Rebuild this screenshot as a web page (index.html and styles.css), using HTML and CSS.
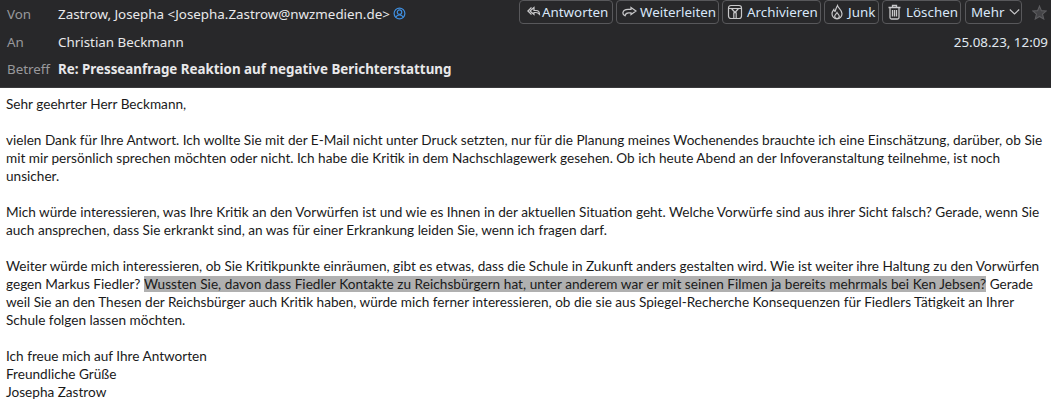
FILE: index.html
```html
<!DOCTYPE html>
<html lang="de">
<head>
<meta charset="utf-8">
<title>Re: Presseanfrage</title>
<link rel="stylesheet" href="styles.css">
</head>
<body>
<header class="head">
  <div class="row row-from">
    <span class="label">Von</span>
    <span class="value">Zastrow, Josepha &lt;Josepha.Zastrow@nwzmedien.de&gt;</span>
    <svg class="contact" width="13" height="13" viewBox="0 0 14 14" fill="none" stroke="#3f8fe0" stroke-width="1.3"><circle cx="7" cy="7" r="5.8"/><circle cx="7" cy="5.6" r="2.4"/><path d="M3 11c1-2 2.4-2.600 4-2.600s3 .6 4 2.600"/></svg>
    <div class="actions">
      <button class="btn btn-reply"><svg width="14" height="14" viewBox="0 0 14 14" fill="none" stroke="#c8c8ca" stroke-width="1.2"><path d="M7 2.500 3 6l4 3.500V7.500h2c1.500 0 2.500.7 3.500 1.800 0-1.800-.7-3.800-3.500-3.800H7z"/><path d="M4.500 2.500.8 6l3.700 3.500"/></svg>Antworten</button>
      <button class="btn btn-forward"><svg width="15" height="14" viewBox="0 0 15 14" fill="none" stroke="#c8c8ca" stroke-width="1.2"><path d="M9 2.500 14 6 9 9.500V7.800H6.500c-1.700 0-3 .8-3.500 3-1.500-.8-2.300-2-2-3.300C1.300 5.700 3 4.400 6 4.400h3z"/></svg>Weiterleiten</button>
      <button class="btn btn-archive"><svg width="16" height="16" viewBox="0 0 16 16" fill="none" stroke="#c8c8ca" stroke-width="1.2"><rect x="1.500" y="1.500" width="13" height="13" rx="2.500"/><path d="M2 4.500h12M4.500 4.500 8 8.500l3.500-4M6.800 14.500V9l1.200-.5 1.200.5v5.500"/></svg>Archivieren</button>
      <button class="btn btn-junk"><svg width="14" height="16" viewBox="0 0 14 16" fill="none" stroke="#c8c8ca" stroke-width="1.2"><path d="M7.500 1.500c.3 2.500 4.500 4 4.500 8.300a5 5 0 0 1-10 0c0-2.100 1-3.300 1.800-4.300.2 1 .6 1.600 1.200 1.900C5.800 5.500 6.300 3.200 7.500 1.500z"/><path d="M7 14.500c-1.400 0-2.300-1-2.300-2.200 0-1.500 1.500-2.200 2.300-3.800.8 1.600 2.300 2.300 2.300 3.800 0 1.200-.9 2.200-2.300 2.200z"/></svg>Junk</button>
      <button class="btn btn-delete"><svg width="15" height="16" viewBox="0 0 15 16" fill="none" stroke="#c8c8ca" stroke-width="1.3"><path d="M1.500 3.500h12M5.500 3.500V1.500h4v2M3 3.500v10a1.500 1.500 0 0 0 1.500 1.500h6A1.500 1.500 0 0 0 12 13.500v-10M5.500 6v6.500M7.500 6v6.500M9.500 6v6.500"/></svg>Löschen</button>
      <button class="btn btn-more">Mehr<svg width="11" height="8" viewBox="0 0 11 8" fill="none" stroke="#c8c8ca" stroke-width="1.100"><path d="M.8 1.500 5.500 6l4.700-4.500"/></svg></button>
      <svg class="star" width="15" height="15" viewBox="0 0 16 16" fill="#444447" stroke="#5c5c5f" stroke-width="1.200"><path d="M8 1.200 10 6l5.200.4-4 3.400 1.300 5.100L8 12.200l-4.500 2.700 1.300-5.100-4-3.400L6 6z"/></svg>
    </div>
  </div>
  <div class="row row-to">
    <span class="label">An</span>
    <span class="value">Christian Beckmann</span>
    <span class="date">25.08.23, 12:09</span>
  </div>
  <div class="row row-subject">
    <span class="label">Betreff</span>
    <strong class="subject">Re: Presseanfrage Reaktion auf negative Berichterstattung</strong>
  </div>
</header>
<main class="mail">
  <p>Sehr geehrter Herr Beckmann,</p>
  <p>vielen Dank für Ihre Antwort. Ich wollte Sie mit der E-Mail nicht unter Druck setzten, nur für die Planung meines Wochenendes brauchte ich eine Einschätzung, darüber, ob Sie<br>mit mir persönlich sprechen möchten oder nicht. Ich habe die Kritik in dem Nachschlagewerk gesehen. Ob ich heute Abend an der Infoveranstaltung teilnehme, ist noch<br>unsicher.</p>
  <p>Mich würde interessieren, was Ihre Kritik an den Vorwürfen ist und wie es Ihnen in der aktuellen Situation geht. Welche Vorwürfe sind aus ihrer Sicht falsch? Gerade, wenn Sie<br>auch ansprechen, dass Sie erkrankt sind, an was für einer Erkrankung leiden Sie, wenn ich fragen darf.</p>
  <p>Weiter würde mich interessieren, ob Sie Kritikpunkte einräumen, gibt es etwas, dass die Schule in Zukunft anders gestalten wird. Wie ist weiter ihre Haltung zu den Vorwürfen<br>gegen Markus Fiedler? <mark class="hl">Wussten Sie, davon dass Fiedler Kontakte zu Reichsbürgern hat, unter anderem war er mit seinen Filmen ja bereits mehrmals bei Ken Jebsen?</mark> Gerade<br>weil Sie an den Thesen der Reichsbürger auch Kritik haben, würde mich ferner interessieren, ob die sie aus Spiegel-Recherche Konsequenzen für Fiedlers Tätigkeit an Ihrer<br>Schule folgen lassen möchten.</p>
  <p>Ich freue mich auf Ihre Antworten<br>Freundliche Grüße<br>Josepha Zastrow</p>
</main>
</body>
</html>
```
FILE: styles.css
```css
html, body {
  margin: 0;
  padding: 0;
  background: #fff;
  overflow: hidden;
}
.head {
  background: #28282a;
  color: #e8e8ea;
  font: 13.36px/18px "Noto Sans", sans-serif;
  height: 87px;
  border-bottom: 1px solid #3a3a3c;
  box-sizing: content-box;
}
.row {
  display: flex;
  align-items: center;
  padding-left: 7px;
}
.row-from { height: 27px; }
.row-to { height: 29px; }
.row-subject { height: 26px; }
.label {
  width: 51px;
  flex: none;
  color: #98989c;
}
.contact { margin-left: 3px; }
.actions {
  margin-left: auto;
  display: flex;
  align-items: center;
  gap: 3px;
  height: 24px;
  align-self: flex-start;
}
.btn {
  display: flex;
  align-items: center;
  flex: none;
  height: 24px;
  background: transparent;
  color: #d8e6f8;
  border: 1px solid #58585b;
  border-radius: 4px;
  font: inherit;
  box-sizing: border-box;
  white-space: nowrap;
}
.btn-reply { width: 94px; padding: 0 0 0 7px; gap: 1px; }
.btn-forward { width: 103px; padding: 0 0 0 5px; gap: 3px; }
.btn-archive { width: 99px; padding: 0 0 0 4px; gap: 4px; }
.btn-junk { width: 55px; padding: 0 0 0 5px; gap: 4px; }
.btn-delete { width: 79px; padding: 0 0 0 4px; gap: 4px; }
.btn-more { width: 57px; padding: 0 0 0 5px; gap: 5px; margin-left: 1px; }
.star { margin: 0 4px 0 7px; }
.date {
  margin-left: auto;
  margin-right: 3px;
  color: #e0e8f0;
}
.subject { font-weight: 700; }
.mail {
  padding: 7px 6px 0;
  color: #1a1a1a;
  font: 13.6px/18px "Lato", sans-serif;
  white-space: nowrap;
}
.mail p { margin: 0 0 18px; }
.hl {
  background: #b0b0b0;
  color: inherit;
  letter-spacing: 0.04px;
}
```
